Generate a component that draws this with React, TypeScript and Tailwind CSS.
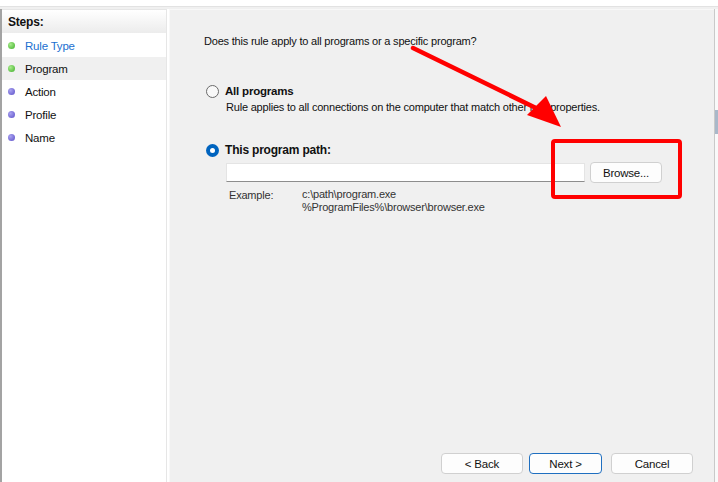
import React from 'react';

const steps = [
  { label: 'Rule Type', done: true, link: true },
  { label: 'Program', done: true, current: true },
  { label: 'Action', done: false },
  { label: 'Profile', done: false },
  { label: 'Name', done: false },
];

const StepDot: React.FC<{ done: boolean }> = ({ done }) => (
  <span
    className={
      done
        ? 'w-[7px] h-[7px] rounded-full bg-[radial-gradient(circle_at_35%_35%,#a8ec8c,#3fae2a)]'
        : 'w-[7px] h-[7px] rounded-full bg-[radial-gradient(circle_at_35%_35%,#a9a2f0,#5b4fc8)]'
    }
  />
);

const WinButton: React.FC<{ label: string; primary?: boolean; className?: string }> = ({ label, primary, className }) => (
  <button
    className={`h-[21px] rounded-[4px] bg-[#fdfdfd] text-[11.5px] text-[#111] border ${primary ? 'border-[#1f6fc0]' : 'border-[#d0d0d0]'} ${className ?? ''}`}
  >
    {label}
  </button>
);

export default function App() {
  return (
    <div className="relative w-[718px] h-[482px] overflow-hidden bg-[#f0f0f0] flex flex-col font-['Liberation_Sans',Arial,sans-serif] text-[11px] leading-[14px] tracking-[-0.2px] text-[#111]">
      {/* top strip from window above */}
      <div className="h-[7px] bg-white border-b border-[#e2e2e2] shrink-0" />

      <div className="flex flex-1 pt-[2px]">
        {/* steps panel */}
        <div className="w-[169px] shrink-0 bg-white border-l-2 border-[#a3a3a3] flex">
          <div className="w-[165px] border-r border-t border-[#e6e6e6] flex flex-col">
            <div className="h-[23px] flex items-center pl-[6px] font-bold text-[12px] bg-gradient-to-b from-white to-[#ececec]">
              Steps:
            </div>
            <div className="flex flex-col pt-[1px]">
              {steps.map((s) => (
                <div
                  key={s.label}
                  className={`h-[23px] flex items-center gap-[10px] pl-[6px] ${s.current ? 'bg-[#f0f0f0]' : ''}`}
                >
                  <StepDot done={s.done} />
                  <span className={`text-[11.5px] ${s.link ? 'text-[#1a6fd0]' : ''}`}>{s.label}</span>
                </div>
              ))}
            </div>
          </div>
        </div>

        {/* main page */}
        <div className="flex-1 flex flex-col border-t border-l border-[#f8f8f8] pl-[34px] pt-[24px]">
          <p>Does this rule apply to all programs or a specific program?</p>

          <div className="mt-[35px] pl-[2px] flex flex-col">
            <label className="flex items-center gap-[6px] h-[16px]">
              <span className="w-[13px] h-[13px] rounded-full border border-[#6a6a6a] bg-[#f8f8f8]" />
              <span className="font-bold text-[11.5px]">All programs</span>
            </label>
            <p className="pl-[20px] mt-[1px]">Rule applies to all connections on the computer that match other rule properties.</p>

            <label className="flex items-center gap-[6px] h-[16px] mt-[28px]">
              <span className="w-[13px] h-[13px] rounded-full bg-[#0064bf] flex items-center justify-center">
                <span className="w-[5px] h-[5px] rounded-full bg-white" />
              </span>
              <span className="font-bold text-[12px]">This program path:</span>
            </label>

            <div className="pl-[20px] mt-[4px] flex items-center gap-[5px]">
              <div className="w-[359px] h-[19px] bg-white border border-[#e4e4e4] border-b-[#8d8d8d]" />
              <WinButton label="Browse..." className="w-[72px] h-[20px]" />
            </div>

            <div className="pl-[23px] mt-[5px] flex">
              <span className="w-[73px] text-[#333]">Example:</span>
              <div className="flex flex-col leading-[13px] text-[#333]">
                <span>c:\path\program.exe</span>
                <span>%ProgramFiles%\browser\browser.exe</span>
              </div>
            </div>
          </div>

          <div className="mt-auto mb-[8px] flex justify-end pr-[21px]">
            <WinButton label="< Back" className="w-[82px]" />
            <WinButton label="Next >" primary className="w-[73px] ml-[6px]" />
            <WinButton label="Cancel" className="w-[82px] ml-[9px]" />
          </div>
        </div>

        {/* edge of the window behind */}
        <div className="w-[4px] shrink-0 bg-[#f9f9f9] border-l border-[#c9c9c9] flex flex-col">
          <div className="mt-[101px] h-[24px] bg-[#a9b8c9]" />
        </div>
      </div>

      {/* red annotation */}
      <svg className="absolute inset-0 pointer-events-none" width="718" height="482" viewBox="0 0 718 482">
        <line x1="413" y1="48" x2="540" y2="110" stroke="#ff0000" strokeWidth="4.5" strokeLinecap="round" />
        <polygon points="561,127 527,115 546,96" fill="#ff0000" />
        <rect x="553" y="141" width="127" height="56" rx="2" fill="none" stroke="#ff0000" strokeWidth="4" />
      </svg>
    </div>
  );
}
